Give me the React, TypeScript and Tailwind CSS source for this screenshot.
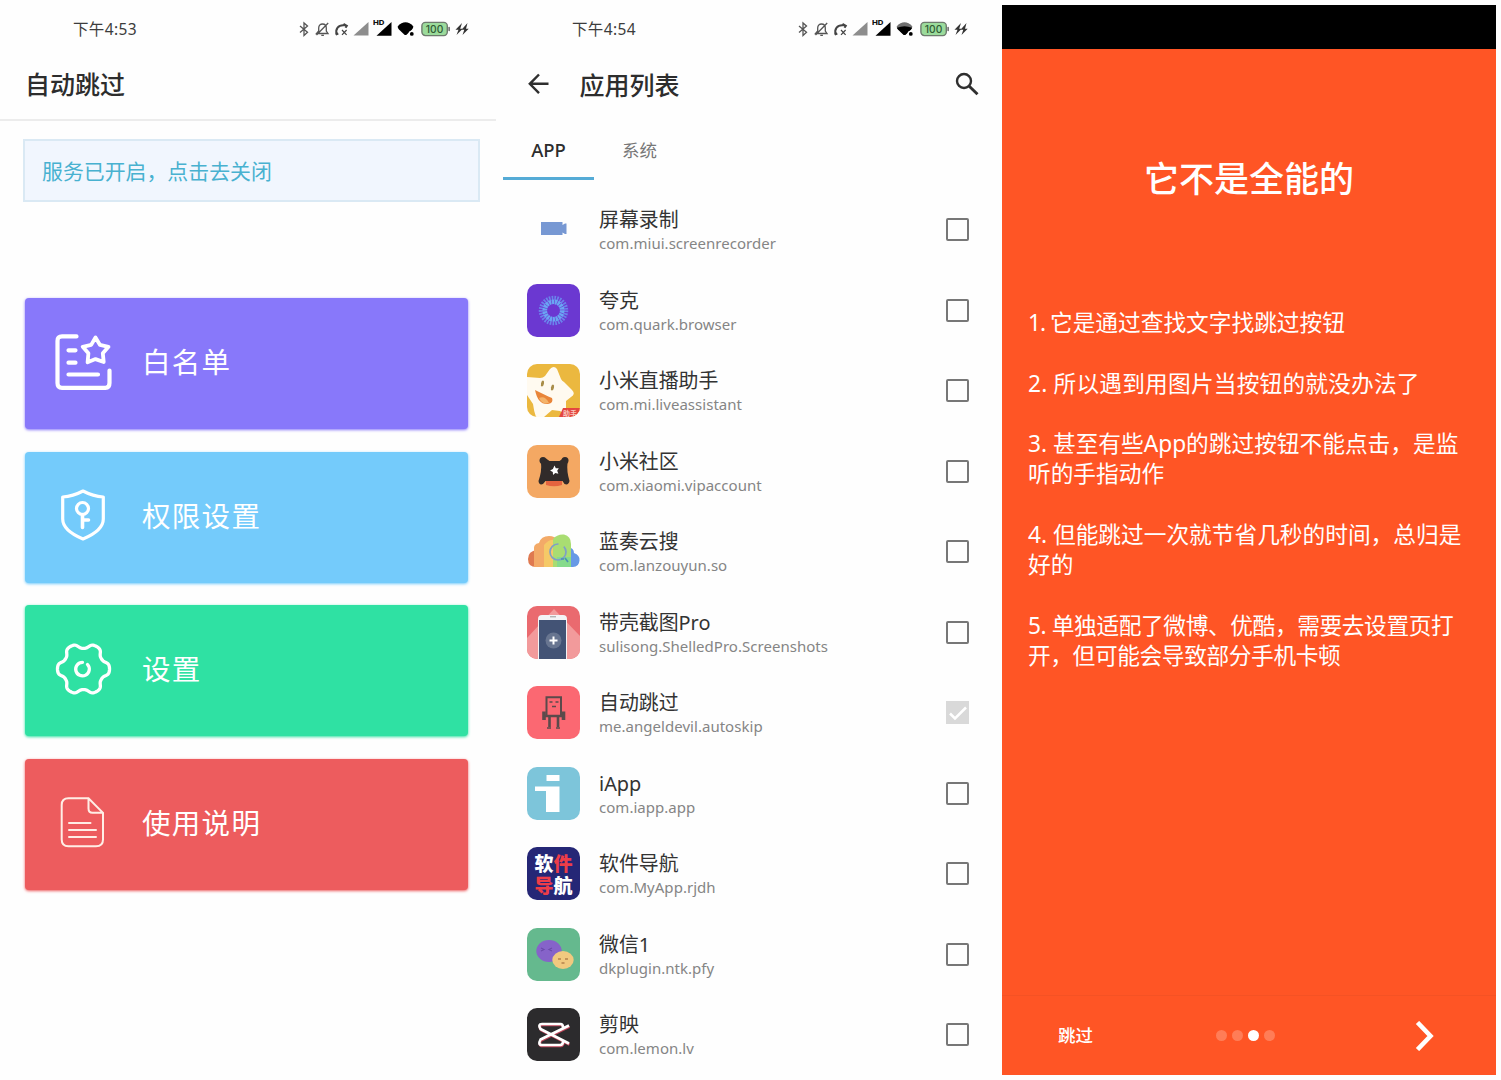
import React from "react";

const gearPath = (() => {
  const pts: string[] = [];
  for (let i = 0; i < 180; i++) {
    const a = (i * 2 * Math.PI) / 180;
    const r = 23.2 + 3 * Math.tanh(1.5 * (Math.cos(6 * a) + 0.15));
    pts.push(`${(30.5 + r * Math.cos(a)).toFixed(2)} ${(30 + r * Math.sin(a)).toFixed(2)}`);
  }
  return `M${pts.join("L")}Z`;
})();

function StatusBar({ time, weakWifi }: { time: string; weakWifi?: boolean }) {
  return (
    <div className="flex h-[58px] items-center text-[#3c3c3c]">
      <span className="ml-[73px] w-[225px] text-[15.5px] leading-6 tracking-[0.35px]">{time}</span>
      <svg className="mr-[5px] h-4 w-3" viewBox="0 0 12 16" fill="none" stroke="#555" strokeWidth="1.3">
        <path d="M2 5l7.500 6.300L6 14.500V2l3.500 3.100L2 11.500" />
      </svg>
      <svg className="mr-[4px] h-4 w-[15px]" viewBox="0 0 15 16" fill="none" stroke="#555" strokeWidth="1.3">
        <path d="M3.700 11V7C3.700 4.300 5.500 3 7.500 3S11.300 4.300 11.300 7v3l1.700 2.500H1.500L3.700 10M6.300 14.300h2.600M13.200 2L1.500 14" />
      </svg>
      <svg className="mr-[4px] h-4 w-[15px]" viewBox="0 0 15 16" fill="none" stroke="#444">
        <path d="M2.800 13.500C1 8.500 4 3.200 11 4.300" strokeWidth="2" />
        <path d="M1.700 13.500L4.300 12.500M9.500 3l3.300 1.800-1.300 2" strokeWidth="2" />
        <path d="M8 9l4.600 4.800M12.600 9l-4.600 4.800" strokeWidth="1.200" />
      </svg>
      <svg className="mr-[4px] h-4 w-4" viewBox="0 0 16 16">
        <path d="M15.500 1v13.500H.500z" fill="#8d8d8d" />
      </svg>
      <svg className="mr-[5px] h-5 w-[19px]" viewBox="0 0 19 20">
        <path d="M18.500 3v13.700H3.500z" fill="#000" />
        <text x="0" y="6.300" fontSize="6.500" fontWeight="800" textLength="11.500" lengthAdjust="spacingAndGlyphs" fontFamily="Inter, sans-serif" stroke="#fff" strokeWidth="1.200" paintOrder="stroke" fill="#111">HD</text>
      </svg>
      <svg className="mr-[6px] h-4 w-[18px]" viewBox="0 0 18 16">
        <path d="M.800 5.500Q1.500 3.800 4.500 2.200Q8.500 .500 12.500 2.200Q15.500 3.800 16.200 5.500Q16.500 7 15 8.500L9.800 13.500Q8.500 14.500 7.200 13.500L2 8.500Q.500 7 .800 5.500z" fill={weakWifi ? "#707070" : "#000"} />
        {weakWifi && <path d="M1 6.800Q8.500 3.500 16 6.800Q16 7.500 15 8.500L9.800 13.500Q8.500 14.500 7.200 13.500L2 8.500Q1 7.500 1 6.800z" fill="#000" />}
        <circle cx="14.500" cy="12.700" r="2.900" fill="#fff" />
        <circle cx="14.800" cy="12.900" r="1.900" fill="#000" />
      </svg>
      <svg className="mr-[4px] h-4 w-[30px]" viewBox="0 0 30 16">
        <rect x=".900" y="1.400" width="25.400" height="13.200" rx="3.500" fill="#9bdb9b" stroke="#6e7b6e" strokeWidth="1.400" />
        <rect x="27.300" y="5.800" width="1.700" height="4.400" rx=".8" fill="#777" />
        <text x="4.800" y="11.700" fontSize="10" fontWeight="500" textLength="17.500" lengthAdjust="spacingAndGlyphs" fontFamily="Inter, sans-serif" fill="#2f5a34">100</text>
      </svg>
      <svg className="h-4 w-[14px]" viewBox="0 0 14 16" fill="#333">
        <path d="M7 2L.500 8.700h3L1.500 14 7.700 7.700H5.200zM12.500 2L6.500 8.700h2.800L7.500 14 13.700 7.700h-2.700z" />
      </svg>
    </div>
  );
}

const menu = [
  {
    label: "白名单",
    card: "h-[131px] bg-[#8878fa] shadow-[0_1px_3px_#8878fa]",
    icon: (
      <g strokeWidth="4.200">
        <path d="M23.500 4.400H9Q4.500 4.400 4.500 9V51Q4.500 55.800 9 55.800H52.500Q56.500 55.800 56.500 51V38.500" />
        <path d="M15.500 18.300H22.500M15.500 30.700H22.500M15.500 42.500H45" />
        <path strokeWidth="3.800" strokeLinejoin="round" d="M42.500 5.500L47 12.900 55.500 14.800 49.800 21.300 50.700 30 42.500 27.100 34.600 30.200 35.400 21.300 29.700 14.800 38.200 12.900z" />
      </g>
    ),
  },
  {
    label: "权限设置",
    card: "h-[131px] bg-[#74cbfb] shadow-[0_1px_3px_#74cbfb]",
    icon: (
      <g strokeWidth="3.200">
        <path strokeLinejoin="round" d="M30 5Q40 10.300 50.300 11V33Q50.300 44.500 30 53Q9.700 44.500 9.700 33V11Q20 10.300 30 5z" />
        <circle cx="29.500" cy="22.500" r="6" />
        <path d="M29.500 28.500V41.500M30 34H35.500" strokeWidth="3.600" />
      </g>
    ),
  },
  {
    label: "设置",
    card: "h-[131px] bg-[#2fe1a3] shadow-[0_1px_3px_#2fe1a3]",
    icon: (
      <g strokeWidth="3.300">
        <path d={gearPath} />
        <path d="M29.500 23.300A6.800 6.800 0 1 0 34.500 25.500" />
      </g>
    ),
  },
  {
    label: "使用说明",
    card: "h-[131px] bg-[#ed5c5e] shadow-[0_1px_3px_#ed5c5e]",
    icon: (
      <g strokeWidth="2" stroke="#ffeee6">
        <path d="M35.500 5.300H15.500Q8.700 5.300 8.700 12V46.500Q8.700 53.300 15.500 53.300H43Q50 53.300 50 46.500V19.800zM35.500 5.300V15.500Q35.500 19.800 39.500 19.800H50" />
        <path d="M16 30H37.500M16 37H43M16 44H43" />
      </g>
    ),
  },
];

function HomeScreen() {
  return (
    <section className="w-[499px] shrink-0">
      <StatusBar time="下午4:53" />
      <header className="flex h-[63px] w-[496px] items-center border-b-2 border-[#ececec] pb-[9px] pl-[25px]">
        <h1 className="text-[25px] font-medium leading-9 text-[#2d2d2d]">自动跳过</h1>
      </header>
      <button className="ml-[23px] mt-[18px] flex h-[63px] w-[457px] items-center border-2 border-[#dae9f4] bg-[#f1f6fe] pl-[17px] pt-[2px] text-[20.9px] text-[#48b1d0]">
        服务已开启，点击去关闭
      </button>
      <nav className="ml-[25px] mt-[96px] flex w-[443px] flex-col gap-[22.7px]">
        {menu.map((m) => (
          <a key={m.label} className={`flex items-center rounded-[4px] pb-[3px] pl-[28px] text-white ${m.card}`}>
            <svg className="h-[60px] w-[60px]" viewBox="0 0 60 60" fill="none" stroke="#fff" strokeLinecap="round">
              {m.icon}
            </svg>
            <span className="ml-[29px] text-[28.500px] leading-10 tracking-[1.300px]">{m.label}</span>
          </a>
        ))}
      </nav>
    </section>
  );
}

type AppRow = { name: string; pkg: string; icon: React.ReactNode; checked?: boolean };

const apps: AppRow[] = [
  {
    name: "屏幕录制",
    pkg: "com.miui.screenrecorder",
    icon: <path d="M14 19H35.500V22L38 20.500H39.500V31H38L35.500 29.500V32H14z" fill="#7798d3" />,
  },
  {
    name: "夸克",
    pkg: "com.quark.browser",
    icon: (
      <>
        <rect width="53" height="53" fill="#6b38d1" />
        <circle cx="26.500" cy="26.500" r="12.500" fill="none" stroke="#6a83ec" strokeWidth="4.500" strokeDasharray="1.600 1.100" />
        <circle cx="26.500" cy="26.500" r="8.700" fill="none" stroke="#6aa6f3" strokeWidth="4.600" strokeDasharray="2.400 .6" />
      </>
    ),
  },
  {
    name: "小米直播助手",
    pkg: "com.mi.liveassistant",
    icon: (
      <>
        <rect width="53" height="53" fill="#ebb83f" />
        <path d="M23 5Q27 1 30 5L34 15Q35 17 37 18L45 26Q49 30 44 33L39 37V46Q37 50 33 47L25 46 17 53H9Q7 48 6 40L0 31V13L13 14Q16 14 18 12z" fill="#fffaf0" />
        <path d="M8 26Q18 31 25 34Q27 39 21 40Q11 41 8 26z" fill="#e98539" />
        <path d="M12 34q6-3 10 5q-7 2-10-5z" fill="#f4b36a" />
        <ellipse cx="15.500" cy="19.500" rx="1.500" ry="3" fill="#a98d48" transform="rotate(12 15.500 19.500)" />
        <ellipse cx="25.500" cy="23.500" rx="1.500" ry="3" fill="#a98d48" transform="rotate(12 25.500 23.500)" />
        <path d="M36 44H53V53H32z" fill="#e4463f" />
        <text x="36" y="51.500" fontSize="7" fontWeight="700" fill="#f7c7bd">助手</text>
      </>
    ),
  },
  {
    name: "小米社区",
    pkg: "com.xiaomi.vipaccount",
    icon: (
      <>
        <rect width="53" height="53" fill="#f4a863" />
        <path d="M19 36H35V40Q27 42.500 19 40z" fill="#e5643f" />
        <g fill="#312b2a">
          <circle cx="16" cy="15.500" r="3.500" />
          <circle cx="38" cy="15.500" r="3.500" />
          <path d="M14 18L19 13.500L22.500 16H32.500L36 13.500L40.500 18Q39.500 26 42.500 36Q41.500 40.500 37.500 39L35.500 36H18.500L16 39Q12 40.500 11.500 36Q15 26 14 18z" />
        </g>
        <path d="M27.500 20.500l1.300 2.800 3-.1-1.600 2.600 1.200 2.900-3.100-.7-2.300 2-.2-3.100-2.700-1.400 2.800-1.500z" fill="#fff" />
      </>
    ),
  },
  {
    name: "蓝奏云搜",
    pkg: "com.lanzouyun.so",
    icon: (
      <>
        <path d="M10 25Q1 26 1 34Q1 42 9 42H16V25z" fill="#df7950" />
        <path d="M41 22Q47 23 47 28Q53 30 52.500 35.500Q52 42 46 42H36V22z" fill="#6799e6" />
        <path d="M7 42V25Q6 19 12 18Q14 11 22 11Q28 11 32 16V42z" fill="#f3aa68" />
        <path d="M17 42V20Q22 14 28 15L34 26V42z" fill="#f5c967" />
        <path d="M26 42V14Q30 9 37 9.500Q44 11 44 19V42z" fill="#a9dd72" />
        <path d="M30 42V32H44V42z" fill="#86db8c" />
        <circle cx="31" cy="27" r="8" fill="none" stroke="#7f9fc8" strokeWidth="1.700" strokeDasharray="38 6" />
        <path d="M34 34H37M38 33L41 37" fill="none" stroke="#4b93b0" strokeWidth="1.700" />
      </>
    ),
  },
  {
    name: "带壳截图Pro",
    pkg: "sulisong.ShelledPro.Screenshots",
    icon: (
      <>
        <rect width="53" height="53" fill="#ea6a6f" />
        <path d="M0 32L27 3 53 30V53H0z" fill="#f29a9b" />
        <path d="M11 53V13Q11 9 15 9H36Q40 9 40 13V53z" fill="#f3f4f6" />
        <path d="M12 53V14H39V53z" fill="#435375" />
        <path d="M23 10.800H29" stroke="#999" />
        <circle cx="26.500" cy="34.500" r="8" fill="#687590" />
        <path d="M26.500 30.500V38.500M22.500 34.500H30.500" stroke="#fff" strokeWidth="2" />
      </>
    ),
  },
  {
    name: "自动跳过",
    pkg: "me.angeldevil.autoskip",
    checked: true,
    icon: (
      <>
        <rect width="53" height="53" fill="#fb6872" />
        <g fill="none" stroke="#5b4a4b">
          <path d="M19.500 11.300H34V30H19.500z" strokeWidth="2" />
          <path d="M17 25.500V34M36.500 25.500V34" strokeWidth="3.600" />
          <path d="M18 30H36" strokeWidth="2.500" />
          <path d="M22.500 31V41M31 31V41" strokeWidth="2.600" />
          <path d="M20 42H24M29 42H33" strokeWidth="1.600" />
          <path d="M22.500 16h3M28.500 16h3M25 20.500h4" strokeWidth="1.400" />
        </g>
      </>
    ),
  },
  {
    name: "iApp",
    pkg: "com.iapp.app",
    icon: (
      <>
        <rect width="53" height="53" fill="#7dc5da" />
        <path d="M19.500 8H32.500V14H19.500zM8 19.500H32.500V45H19V24H8z" fill="#fff" />
      </>
    ),
  },
  {
    name: "软件导航",
    pkg: "com.MyApp.rjdh",
    icon: (
      <>
        <rect width="53" height="53" fill="#252776" />
        <g fontSize="19" fontWeight="900">
          <text x="7.500" y="23.500" fill="#fff">软</text>
          <text x="26.500" y="23.500" fill="#ee3d48">件</text>
          <text x="7.500" y="45.500" fill="#ee3d48">导</text>
          <text x="26.500" y="45.500" fill="#fff">航</text>
        </g>
      </>
    ),
  },
  {
    name: "微信1",
    pkg: "dkplugin.ntk.pfy",
    icon: (
      <>
        <rect width="53" height="53" fill="#65b98e" />
        <ellipse cx="22" cy="23" rx="12.700" ry="11" fill="#8663c9" />
        <path d="M14 20l3 1.500-3 1.500M25 20l-3 1.500 3 1.500" fill="none" stroke="#6a4bab" strokeWidth="1.200" />
        <ellipse cx="36" cy="32" rx="10.700" ry="9" fill="#f1c97f" />
        <path d="M31 31h3M38 31h3M34.500 35h3" stroke="#b4814c" strokeWidth="1.400" />
      </>
    ),
  },
  {
    name: "剪映",
    pkg: "com.lemon.lv",
    icon: (
      <>
        <rect width="53" height="53" fill="#2c2b2d" />
        <g fill="none" strokeWidth="2.600" strokeLinejoin="round">
          <path d="M42.500 18.500L14 32.500Q11 38 15.500 38H34Q36.500 37.500 36.500 34M42.500 36.500L14 22Q11 17 15.500 17H34Q36.500 17 36.500 20.500" stroke="#c0475b" />
          <path d="M42 17.500L13.500 31.500Q10.500 37 15 37H33.500Q36 36.500 36 33.500M42 35.500L13.500 21Q10.500 16 15 16H33.500Q36 16 36 19.500" stroke="#fff" />
        </g>
      </>
    ),
  },
];

function AppListScreen() {
  return (
    <section className="w-[503px] shrink-0">
      <StatusBar time="下午4:54" weakWifi />
      <header className="flex h-[62px] items-center pb-[10px] pl-[29px]">
        <svg className="h-[22px] w-[22px]" viewBox="0 0 22 22" fill="none" stroke="#2f2f2f" strokeWidth="2.400">
          <path d="M11 1.500L1.800 10.800 11 20.200M1.800 10.800H20.500" />
        </svg>
        <h1 className="ml-[29.500px] mt-[2px] text-[25px] font-medium leading-9 text-[#2d2d2d]">应用列表</h1>
        <svg className="ml-[275px] h-[24px] w-[24px]" viewBox="0 0 24 24" fill="none" stroke="#2f2f2f" strokeWidth="2.400">
          <circle cx="9" cy="9" r="7" />
          <path d="M14 14l8.500 8.300" strokeWidth="2.900" />
        </svg>
      </header>
      <div className="ml-1 flex h-[60px] text-[17.500px]">
        <div className="flex w-[91px] items-center justify-center border-b-[3px] border-[#55abd6] pt-[3px] text-[18.500px] font-medium text-[#2d2d2d]">
          APP
        </div>
        <div className="flex w-[91px] items-center justify-center border-b-[3px] border-transparent pt-[3px] text-[#777]">系统</div>
      </div>
      <ul className="mt-[9.500px]">
        {apps.map((a) => (
          <li key={a.pkg} className="flex h-[80.500px] items-center pl-[28px]">
            <svg className="h-[53px] w-[53px] rounded-[10px]" viewBox="0 0 53 53">
              {a.icon}
            </svg>
            <div className="ml-[19px] w-[347px] pt-[3px]">
              <div className="text-[19.900px] leading-6 text-[#333]">{a.name}</div>
              <div className="text-[15px] leading-[22px] tracking-[0.030px] text-[#858585]">{a.pkg}</div>
            </div>
            {a.checked ? (
              <div className="flex h-[23px] w-[23px] items-center justify-center bg-[#d9d9d9]">
                <svg className="h-5 w-5" viewBox="0 0 20 20" fill="none" stroke="#fff" strokeWidth="2.500">
                  <path d="M2 10.500L7 15.500 18 4.500" />
                </svg>
              </div>
            ) : (
              <div className="h-[23px] w-[23px] rounded-[2px] border-2 border-[#777]" />
            )}
          </li>
        ))}
      </ul>
    </section>
  );
}

function IntroScreen() {
  return (
    <section className="mt-[5px] flex h-[1070px] w-[494px] shrink-0 flex-col border-t-[44px] border-black bg-[#ff5525] text-white">
      <h2 className="mt-[106px] text-center text-[35px] font-medium leading-[48px]">它不是全能的</h2>
      <div className="ml-[26px] mt-[105px] flex flex-col gap-[30.250px] whitespace-nowrap text-[22.700px] leading-[30.250px]">
        <p><span className="tracking-[-1px]">1. </span>它是通过查找文字找跳过按钮</p>
        <p className="tracking-[0.200px]">2. 所以遇到用图片当按钮的就没办法了</p>
        <p>3. 甚至有些App的跳过按钮不能点击，是监<br />听的手指动作</p>
        <p>4. 但能跳过一次就节省几秒的时间，总归是<br />好的</p>
        <p className="tracking-[-0.380px]">5. 单独适配了微博、优酷，需要去设置页打<br />开，但可能会导致部分手机卡顿</p>
      </div>
      <footer className="mt-auto flex h-[80px] items-center border-t border-[#f55224] pl-[56px]">
        <span className="w-[158px] text-[17.500px] font-medium">跳过</span>
        <div className="flex w-[60px] gap-[5px]">
          <i className="h-[11px] w-[11px] rounded-full bg-[#ff7d57]" />
          <i className="h-[11px] w-[11px] rounded-full bg-[#ff7d57]" />
          <i className="h-[11px] w-[11px] rounded-full bg-white" />
          <i className="h-[11px] w-[11px] rounded-full bg-[#ff7d57]" />
        </div>
        <svg className="ml-[139px] h-[30px] w-[20px]" viewBox="0 0 20 30" fill="none" stroke="#fff" strokeWidth="4.600">
          <path d="M2.500 1.500L15.500 15 2.500 28.500" />
        </svg>
      </footer>
    </section>
  );
}

export default function App() {
  return (
    <main className="flex h-[1080px] w-[1501px] overflow-hidden bg-[#fefefe] font-['Noto_Sans','Noto_Sans_CJK_SC',sans-serif]">
      <HomeScreen />
      <AppListScreen />
      <IntroScreen />
    </main>
  );
}
